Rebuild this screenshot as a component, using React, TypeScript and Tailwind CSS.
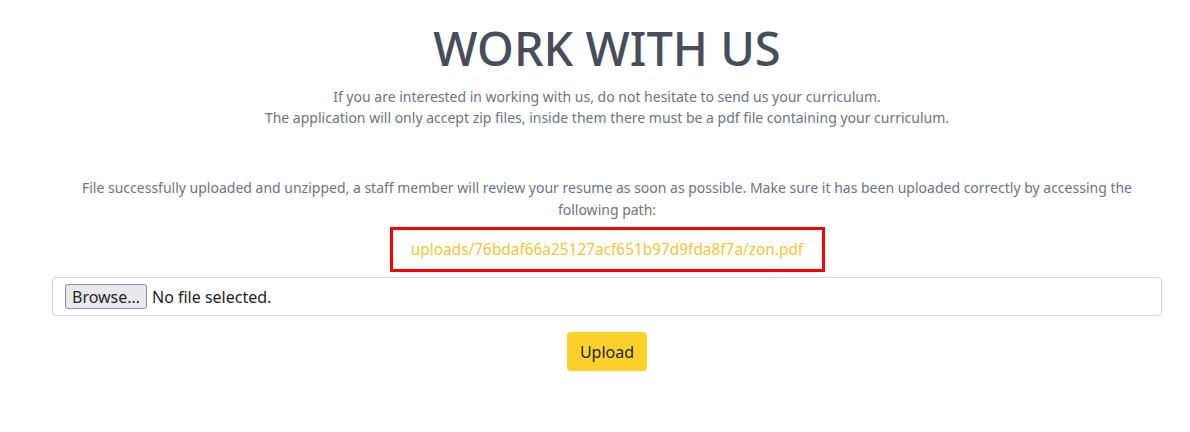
export default function App() {
  return (
    <div className="w-[1190px] h-[432px] bg-white text-[#6c757d]" style={{ fontFamily: '"Noto Sans", sans-serif' }}>
      <div className="w-[1110px] ml-[52px] flex flex-col items-center">
        <h1 className="mt-[20px] text-[47px] leading-[57px] font-medium text-[#474e5a]">WORK WITH US</h1>
        <p className="mt-[9px] text-[14px] leading-[21px] text-center">
          If you are interested in working with us, do not hesitate to send us your curriculum.
          <br />
          The application will only accept zip files, inside them there must be a pdf file containing your curriculum.
        </p>
        <p className="mt-[49px] text-[14px] leading-[22px] text-center px-[20px]">
          File successfully uploaded and unzipped, a staff member will review your resume as soon as possible. Make sure it has been uploaded correctly by accessing the following path:
        </p>
        <div className="mt-[6px] w-[435px] h-[45px] border-[3px] border-[#f00] flex items-center justify-center">
          <a className="text-[15.4px] text-[#f6c530]">uploads/76bdaf66a25127acf651b97d9fda8f7a/zon.pdf</a>
        </div>
        <div className="mt-[5px] w-full h-[39px] border border-[#ced4da] rounded-[4px] flex items-center px-[12px] text-[16px] text-[#212529]">
          <span className="h-[25px] px-[6px] mr-[5px] bg-[#e9e9ed] border border-[#8f8f9d] rounded-[3px] flex items-center">Browse…</span>
          <span>No file selected.</span>
        </div>
        <button className="mt-[16px] h-[39px] px-[13px] bg-[#fcd12b] rounded-[4px] text-[16px] text-[#212529]">Upload</button>
      </div>
    </div>
  );
}
